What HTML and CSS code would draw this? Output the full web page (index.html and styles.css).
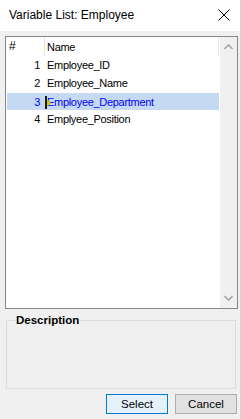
FILE: index.html
```html
<!DOCTYPE html>
<html lang="en">
<head>
  <meta charset="UTF-8">
  <title>Variable List: Employee</title>
  <link rel="stylesheet" href="styles.css">
</head>
<body>
  <div class="window">
    <div class="titlebar">
      <span class="title">Variable List: Employee</span>
      <svg class="close" width="12" height="12" viewBox="0 0 12 12">
        <path d="M0.5 0.5 L11.5 11.5 M11.5 0.5 L0.5 11.5" stroke="#000" stroke-width="1" fill="none"/>
      </svg>
    </div>

    <div class="content">
      <div class="listbox">
        <div class="list">
          <div class="header">
            <div class="col-num">#</div>
            <div class="col-name">Name</div>
          </div>
          <div class="row"><div class="col-num">1</div><div class="col-name">Employee_ID</div></div>
          <div class="row"><div class="col-num">2</div><div class="col-name">Employee_Name</div></div>
          <div class="row selected">
            <div class="col-num">3</div>
            <div class="col-name"><span class="marker"></span>Employee_Department</div>
          </div>
          <div class="row"><div class="col-num">4</div><div class="col-name">Emplyee_Position</div></div>
        </div>
        <div class="scrollbar">
          <svg width="9" height="6" viewBox="0 0 9 6"><path d="M0.5 5 L4.5 1 L8.5 5" stroke="#a6a6a6" stroke-width="1.6" fill="none"/></svg>
          <svg width="9" height="6" viewBox="0 0 9 6"><path d="M0.5 1 L4.5 5 L8.5 1" stroke="#a6a6a6" stroke-width="1.6" fill="none"/></svg>
        </div>
      </div>

      <fieldset class="group">
        <legend>Description</legend>
      </fieldset>

      <div class="buttons">
        <button class="btn default">Select</button>
        <button class="btn">Cancel</button>
      </div>
    </div>
  </div>
</body>
</html>
```

FILE: styles.css
```css
body {
  margin: 0;
  font-family: "Liberation Sans", Arial, sans-serif;
  font-size: 11px;
  color: #000;
}

.window {
  width: 240px;
  height: 419px;
  background: #f0f0f0;
  border-right: 1px solid #d4d4d4;
  display: flex;
  flex-direction: column;
}

.titlebar {
  height: 31px;
  background: #fff;
  display: flex;
  align-items: center;
  justify-content: space-between;
  padding: 0 10px 0 9px;
  flex-shrink: 0;
}

.title {
  font-size: 12px;
  margin-top: -1px;
}

.close {
  margin-top: -1px;
}

.content {
  padding: 5px 2px 0 5px;
  display: flex;
  flex-direction: column;
}

.listbox {
  height: 273px;
  box-sizing: border-box;
  border: 1px solid #828790;
  background: #fff;
  display: flex;
}

.list {
  flex: 1;
  padding: 0 1px;
  letter-spacing: -0.3px;
}

.header {
  display: flex;
  height: 19px;
  align-items: center;
  border-right: 1px solid #e5e5e5;
}

.header .col-num {
  text-align: left;
  padding-left: 2px;
  border-right: 1px solid #e5e5e5;
  height: 19px;
  line-height: 19px;
  font-size: 12px;
  box-sizing: border-box;
}

.row {
  display: flex;
  height: 18px;
  align-items: center;
}

.col-num {
  width: 38px;
  flex-shrink: 0;
  text-align: right;
  padding-right: 5px;
  box-sizing: border-box;
}

.col-name {
  padding-left: 2px;
  position: relative;
}

.row.selected {
  background: #c5daf2;
  color: #0000ff;
  height: 17px;
  margin: 1px 0 0;
}

.marker {
  position: absolute;
  left: 0;
  top: 0;
  width: 2px;
  height: 13px;
  background: #1a1a1a;
}

.marker::after {
  content: "";
  position: absolute;
  left: 2px;
  top: 3px;
  border-left: 4px solid #d6c400;
  border-top: 4px solid transparent;
  border-bottom: 4px solid transparent;
}

.scrollbar {
  width: 17px;
  background: #f0f0f0;
  display: flex;
  flex-direction: column;
  justify-content: space-between;
  align-items: center;
  padding: 7px 0 7px;
  box-sizing: border-box;
}

.group {
  margin: 5px 2px 0 1px;
  padding: 0;
  height: 75px;
  box-sizing: border-box;
  border: 1px solid #dcdcdc;
}

.group legend {
  font-weight: bold;
  font-size: 11.5px;
  padding: 0 1px;
  margin-left: 8px;
  line-height: 13px;
}

.buttons {
  display: flex;
  justify-content: flex-end;
  gap: 7px;
  margin-top: 5px;
  padding-right: 1px;
}

.btn {
  width: 62px;
  height: 20px;
  font-family: "Liberation Sans", Arial, sans-serif;
  font-size: 11.5px;
  border: 1px solid #adadad;
  background: #e1e1e1;
  padding: 0;
  color: #000;
}

.btn.default {
  border-color: #0078d7;
  background: #e5f1fb;
}
```
